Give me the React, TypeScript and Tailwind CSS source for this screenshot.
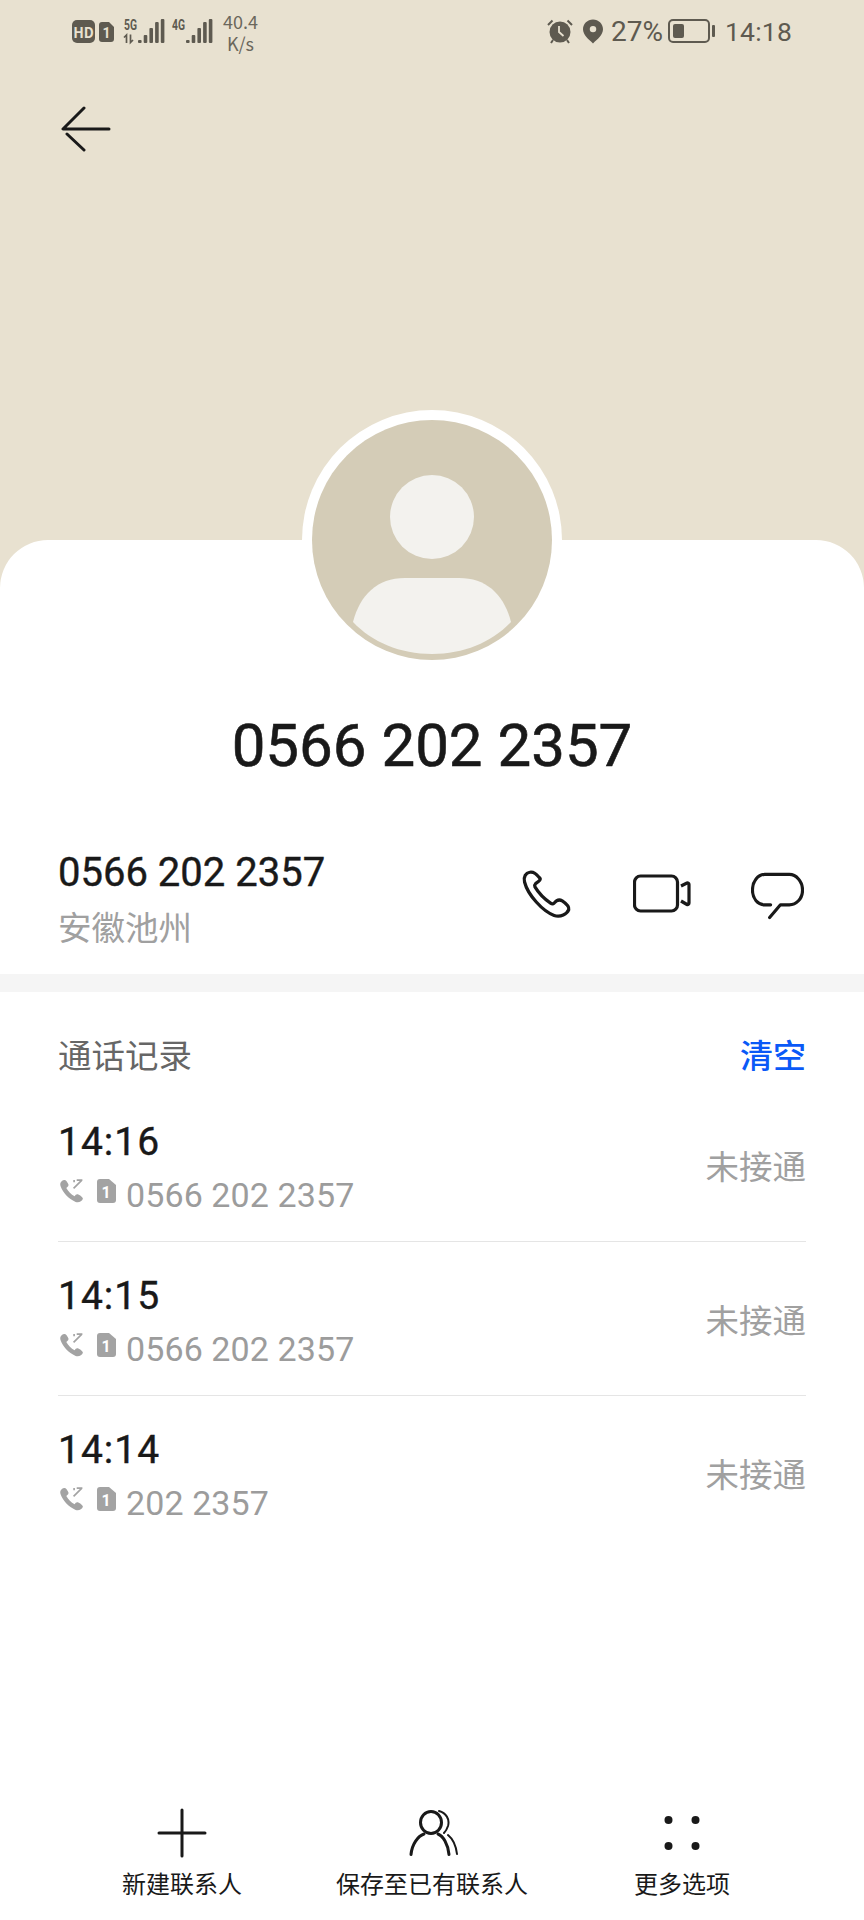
import React from "react";

const LATIN = "font-['Roboto','Noto_Sans_CJK_SC',sans-serif]";
const INK = "#5e5a50";

function Signal({ label, low }: { label: string; low?: boolean }) {
  const xs = [15, 20.7, 26.4, 32.1, 37.8];
  const hs = [3, 8, 15, 21, 24];
  return (
    <svg width="42" height="28" viewBox="0 0 42 28">
      <text x="1" y="13" fontSize="15" fontWeight="700" fill={INK} fontFamily="Roboto" textLength="13" lengthAdjust="spacingAndGlyphs">{label}</text>
      {low && <path d="M3.5 26V18L1 20.5M7.5 17.5V25.5L10 23" stroke={INK} strokeWidth="1.7" fill="none" />}
      {xs.map((x, i) => (
        <rect key={i} x={x} y={26 - hs[i]} width="3.6" height={hs[i]} rx="1" fill={INK} />
      ))}
    </svg>
  );
}

function StatusBar() {
  return (
    <div className="flex h-[56px] items-start justify-between px-[72px] pt-[10px] text-[#5e5a50]">
      <div className="flex items-start">
        <div className="mt-[10px] flex h-[23px] w-[23px] items-center justify-center rounded-[5px] bg-[#5e5a50] text-[14px] font-bold leading-none text-[#e8e1d0]">HD</div>
        <svg className="ml-[4px] mt-[12px]" width="15" height="20" viewBox="0 0 15 20">
          <path d="M3 0H10L15 5V17a3 3 0 0 1-3 3H3a3 3 0 0 1-3-3V3a3 3 0 0 1 3-3Z" fill={INK} />
          <text x="7.5" y="16" textAnchor="middle" fontSize="14" fontWeight="700" fill="#e8e1d0" fontFamily="Roboto">1</text>
        </svg>
        <div className="ml-[9px] mt-[7px]"><Signal label="5G" low /></div>
        <div className="ml-[6px] mt-[7px]"><Signal label="4G" /></div>
        <div className="ml-[9px] flex w-[37px] flex-col items-center text-[18px] leading-[22px] text-[#6b675c]">
          <span>40.4</span>
          <span>K/s</span>
        </div>
      </div>
      <div className="flex items-start">
        <svg className="mt-[9px]" width="26" height="25" viewBox="0 0 26 25">
          <circle cx="13" cy="13" r="10.5" fill={INK} />
          <path d="M12 7V13L16.5 17" stroke="#e8e1d0" strokeWidth="1.8" fill="none" />
          <path d="M1 6L5.5 1.5M25 6L20.5 1.5M6 21L4 24M20 21L22 24" stroke={INK} strokeWidth="2" />
        </svg>
        <svg className="ml-[10px] mt-[9px]" width="20" height="25" viewBox="0 0 21 25">
          <path d="M10.5 0C4.7 0 0 4.6 0 10.2C0 16 6 21 10.5 25C15 21 21 16 21 10.2C21 4.6 16.3 0 10.5 0Z" fill={INK} />
          <circle cx="10.5" cy="10" r="3.4" fill="#e8e1d0" />
        </svg>
        <span className={`ml-[8px] mt-[5px] text-[28px] leading-[33px] ${LATIN}`}>27%</span>
        <div className="ml-[5px] mt-[9px] flex items-center">
          <div className="flex h-[24px] w-[42px] items-center rounded-[5px] border-2 border-[#5e5a50] p-[3px]">
            <div className="h-full w-[11px] rounded-[2px] bg-[#5e5a50]" />
          </div>
          <div className="ml-[2px] h-[12px] w-[3px] rounded-[1px] bg-[#5e5a50]" />
        </div>
        <span className={`ml-[10px] mt-[5px] text-[26.5px] leading-[33px] tracking-[0.2px] ${LATIN}`}>14:18</span>
      </div>
    </div>
  );
}

function Avatar() {
  return (
    <div className="mx-auto mt-[-130px] h-[260px] w-[260px] rounded-full bg-white p-[10px]">
      <svg width="240" height="240" viewBox="0 0 240 240" className="block">
        <circle cx="120" cy="120" r="120" fill="#d4ccb7" />
        <circle cx="120" cy="97" r="42" fill="#f3f2ee" />
        <path d="M41 202C48 175 65 158 93 158H147C175 158 192 175 199 202C180 222 152 234 120 234C88 234 60 222 41 202Z" fill="#f3f2ee" />
      </svg>
    </div>
  );
}

function CallRow({ time, num, last }: { time: string; num: string; last?: boolean }) {
  return (
    <div className={`flex h-[154px] items-start justify-between ${last ? "" : "border-b border-[#e5e5e5]"}`}>
      <div className="flex flex-col pt-[30px]">
        <span className={`text-[39px] leading-[48px] tracking-[1px] text-[#191919] [-webkit-text-stroke:0.4px_#191919] ${LATIN}`}>{time}</span>
        <div className="mt-[9px] flex items-center">
          <svg width="27" height="27" viewBox="0 0 26 26" className="mb-[9px]">
            <path d="M6 3C3 3.5 1.5 6 2.5 9C4.5 15 10 21 17 24C20 25 23 23.5 24 21C24 19.5 22 18 20 17C18 16 17 17 16 18.5C12.5 16.5 10 14 8 10.5C9.5 9.5 10.5 8.5 10 7C9 5 7.5 2.8 6 3Z" fill="#a3a3a3" />
            <path d="M15 11L23 3M18 3H23.5M15.5 3V5" stroke="#a3a3a3" strokeWidth="1.6" fill="none" />
          </svg>
          <svg width="19" height="24" viewBox="0 0 19 24" className="ml-[12px] mb-[8px]">
            <path d="M3 0H12L19 6V21a3 3 0 0 1-3 3H3a3 3 0 0 1-3-3V3a3 3 0 0 1 3-3Z" fill="#a3a3a3" />
            <text x="9" y="19" textAnchor="middle" fontSize="16" fontWeight="700" fill="#fff" fontFamily="Roboto">1</text>
          </svg>
          <span className={`ml-[10px] text-[34px] leading-[40px] tracking-[0.1px] text-[#9c9c9c] ${LATIN}`}>{num}</span>
        </div>
      </div>
      <span className="mt-[55px] text-[33.5px] leading-[44px] text-[#a0a0a0]">未接通</span>
    </div>
  );
}

export default function App() {
  return (
    <div className="flex h-[1920px] w-[864px] flex-col overflow-hidden bg-white font-['Noto_Sans_CJK_SC',sans-serif]">
      <div className="h-[590px] shrink-0 bg-[#e8e1d0]">
        <StatusBar />
        <svg className="ml-[60px] mt-[50px]" width="52" height="46" viewBox="0 0 52 46">
          <path d="M24 2L3 23H49M7 28L24 44" stroke="#191919" strokeWidth="3" strokeLinecap="round" strokeLinejoin="round" fill="none" />
        </svg>
      </div>
      <div className="mt-[-50px] flex flex-1 flex-col rounded-t-[48px] bg-white">
        <Avatar />
        <div className={`mt-[39px] text-center text-[60px] leading-[74px] text-[#191919] [-webkit-text-stroke:0.6px_#191919] ${LATIN}`}>0566 202 2357</div>
        <div className="mt-[65px] flex h-[126px] items-start justify-between pl-[58px] pr-[60px]">
          <div className="flex flex-col">
            <span className={`text-[40px] leading-[50px] text-[#191919] [-webkit-text-stroke:0.4px_#191919] ${LATIN}`}>0566 202 2357</span>
            <span className="mt-[4px] text-[33.5px] leading-[48px] text-[#a0a0a0]">安徽池州</span>
          </div>
          <div className="flex items-start pt-[21px]">
            <svg width="52" height="52" viewBox="60 60 160 160">
              <path d="M90 70C78 72 70 84 74 100C84 140 130 190 165 203C185 210 205 198 210 185C212 176 205 168 190 158C180 152 172 156 165 165C162 168 158 168 154 165C135 152 118 135 106 115C104 110 105 108 108 105C118 98 128 92 118 85C108 72 100 68 90 70Z" fill="none" stroke="#191919" strokeWidth="10" strokeLinejoin="round" />
            </svg>
            <svg width="58" height="40" viewBox="0 0 58 40" className="ml-[61px] mt-[5px]">
              <rect x="1.5" y="2" width="43" height="35" rx="6" fill="none" stroke="#191919" strokeWidth="3.2" />
              <path d="M48 12L54 9C55 8.8 56 9.5 56 10.5V29C56 30 55 31 54 30.5L48 27" fill="none" stroke="#191919" strokeWidth="3.2" strokeLinejoin="round" />
            </svg>
            <svg width="53" height="48" viewBox="0 0 54 48" className="ml-[60px] mt-[3px]">
              <path d="M20 33H14C7 33 1.5 27 1.5 18C1.5 9 7 2 14 2H39C46 2 52.5 9 52.5 18C52.5 27 46 33 39 33H30L19 46" fill="none" stroke="#191919" strokeWidth="3.2" strokeLinecap="round" strokeLinejoin="round" />
            </svg>
          </div>
        </div>
        <div className="h-[18px] bg-[#f5f5f5]" />
        <div className="flex flex-1 flex-col px-[58px]">
          <div className="flex h-[96px] items-end justify-between pb-[12px]">
            <span className="text-[33.5px] leading-[44px] text-[#666666]">通话记录</span>
            <span className="text-[33px] font-medium leading-[44px] text-[#0a59f7]">清空</span>
          </div>
          <CallRow time="14:16" num="0566 202 2357" />
          <CallRow time="14:15" num="0566 202 2357" />
          <CallRow time="14:14" num="202 2357" last />
        </div>
        <div className="grid grid-cols-3 px-[57px] pb-[20px]">
          <div className="flex flex-col items-center">
            <svg width="50" height="50" viewBox="0 0 50 50">
              <path d="M25 2V48M2 25H48" stroke="#191919" strokeWidth="3" strokeLinecap="round" />
            </svg>
            <span className="mt-[8px] text-[24px] leading-[34px] text-[#191919]">新建联系人</span>
          </div>
          <div className="flex flex-col items-center">
            <svg width="52" height="50" viewBox="0 0 52 50">
              <ellipse cx="25" cy="14.5" rx="10.5" ry="11" fill="none" stroke="#191919" strokeWidth="3" />
              <path d="M5 46.5C6 36 12 28 18 26M43 46.5C42 36 37 28 32 26" fill="none" stroke="#191919" strokeWidth="3" strokeLinecap="round" />
              <path d="M33 3C40 5 44 11 42 18C41 21 40 23 38 25M42 27C47 31 50 38 51 46" fill="none" stroke="#191919" strokeWidth="2" strokeLinecap="round" />
            </svg>
            <span className="mt-[8px] text-[24px] leading-[34px] text-[#191919]">保存至已有联系人</span>
          </div>
          <div className="flex flex-col items-center">
            <svg width="50" height="50" viewBox="0 0 50 50">
              <circle cx="11.5" cy="12" r="4" fill="#191919" />
              <circle cx="38.5" cy="12" r="4" fill="#191919" />
              <circle cx="11.5" cy="38" r="4" fill="#191919" />
              <circle cx="38.5" cy="38" r="4" fill="#191919" />
            </svg>
            <span className="mt-[8px] text-[24px] leading-[34px] text-[#191919]">更多选项</span>
          </div>
        </div>
      </div>
    </div>
  );
}
